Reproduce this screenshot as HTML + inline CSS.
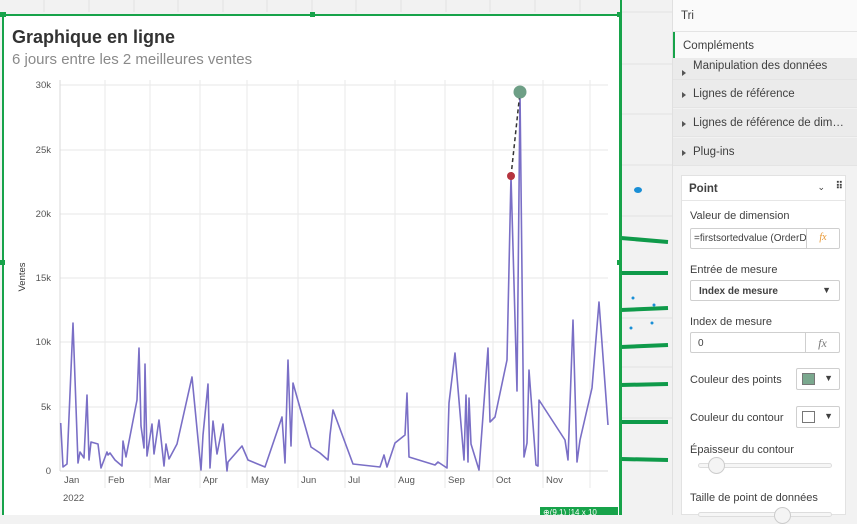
<!DOCTYPE html>
<html><head><meta charset="utf-8"><style>
*{margin:0;padding:0;box-sizing:border-box}
body{width:857px;height:515px;overflow:hidden;background:#f2f2f2;font-family:"Liberation Sans",sans-serif;position:relative;color:#404040}
.abs{position:absolute}
.card{left:2px;top:14px;width:619px;height:501px;background:#fff;border:2px solid #17a34a;border-bottom:none}
.t{font-size:18px;font-weight:bold;color:#333;left:12px;top:27px}
.st{font-size:15px;color:#8a8a8a;left:12px;top:51px}
.panel{left:672px;top:0;width:185px;height:515px;background:#f2f2f2;border-left:1px solid #e0e0e0}
.row{position:absolute;left:0;width:185px;font-size:11.5px;color:#404040}
.sec{background:#ebebeb;height:28px;border-bottom:1px solid #e4e4e4;padding:8px 0 0 20px}
.sec:before{content:"";position:absolute;left:9px;top:12px;border-left:4px solid #555;border-top:3px solid transparent;border-bottom:3px solid transparent}
.lbl{font-size:11px;color:#404040;position:absolute;left:8px}
.box{position:absolute;border:1px solid #cfcfcf;background:#fff;border-radius:2px}
</style></head><body>
<!-- sheet grid top -->
<svg class="abs" style="left:0;top:0" width="672" height="515">
<g stroke="#e2e2e2" stroke-width="1">
<line x1="44" y1="0" x2="44" y2="12"/><line x1="89" y1="0" x2="89" y2="12"/><line x1="134" y1="0" x2="134" y2="12"/><line x1="178" y1="0" x2="178" y2="12"/><line x1="223" y1="0" x2="223" y2="12"/><line x1="267" y1="0" x2="267" y2="12"/><line x1="312" y1="0" x2="312" y2="12"/><line x1="356" y1="0" x2="356" y2="12"/><line x1="401" y1="0" x2="401" y2="12"/><line x1="446" y1="0" x2="446" y2="12"/><line x1="490" y1="0" x2="490" y2="12"/><line x1="535" y1="0" x2="535" y2="12"/><line x1="580" y1="0" x2="580" y2="12"/>
<line x1="622" y1="12" x2="672" y2="12"/><line x1="622" y1="64" x2="672" y2="64"/><line x1="622" y1="114" x2="672" y2="114"/><line x1="622" y1="165" x2="672" y2="165"/><line x1="622" y1="216" x2="672" y2="216"/><line x1="622" y1="318" x2="672" y2="318"/><line x1="622" y1="367" x2="672" y2="367"/><line x1="622" y1="418" x2="672" y2="418"/>
</g>
<g stroke="#0f9a4a" stroke-width="4">
<line x1="621" y1="238" x2="668" y2="242"/><line x1="621" y1="273" x2="668" y2="273"/><line x1="621" y1="310" x2="668" y2="308"/><line x1="621" y1="347" x2="668" y2="345"/><line x1="621" y1="385" x2="668" y2="384"/><line x1="621" y1="422" x2="668" y2="422"/><line x1="621" y1="459" x2="668" y2="460"/>
</g>
<ellipse cx="638" cy="190" rx="4" ry="3" fill="#1a8fd6"/>
<g fill="#1a8fd6"><circle cx="633" cy="298" r="1.5"/><circle cx="654" cy="305" r="1.5"/><circle cx="631" cy="328" r="1.5"/><circle cx="652" cy="323" r="1.5"/></g>
</svg>
<div class="abs card"></div>
<div class="abs" style="left:0;top:12px;width:6px;height:5px;background:#17a34a"></div>
<div class="abs" style="left:310px;top:12px;width:5px;height:5px;background:#17a34a"></div>
<div class="abs" style="left:617px;top:12px;width:5px;height:5px;background:#17a34a"></div>
<div class="abs" style="left:617px;top:260px;width:5px;height:5px;background:#17a34a"></div>
<div class="abs" style="left:0;top:260px;width:5px;height:5px;background:#17a34a"></div>
<div class="abs t">Graphique en ligne</div>
<div class="abs st">6 jours entre les 2 meilleures ventes</div>
<svg class="abs" style="left:0;top:0" width="622" height="515" font-family="Liberation Sans" font-size="9.5" fill="#555">
<g stroke="#ececec" stroke-width="1.2">
<line x1="60" y1="85" x2="608" y2="85"/><line x1="60" y1="150" x2="608" y2="150"/><line x1="60" y1="214" x2="608" y2="214"/><line x1="60" y1="278" x2="608" y2="278"/><line x1="60" y1="342" x2="608" y2="342"/><line x1="60" y1="407" x2="608" y2="407"/>
<line x1="105" y1="80" x2="105" y2="488"/><line x1="150" y1="80" x2="150" y2="488"/><line x1="200" y1="80" x2="200" y2="488"/><line x1="247" y1="80" x2="247" y2="488"/><line x1="298" y1="80" x2="298" y2="488"/><line x1="345" y1="80" x2="345" y2="488"/><line x1="395" y1="80" x2="395" y2="488"/><line x1="445" y1="80" x2="445" y2="488"/><line x1="493" y1="80" x2="493" y2="488"/><line x1="543" y1="80" x2="543" y2="488"/><line x1="590" y1="80" x2="590" y2="488"/>
</g>
<line x1="60" y1="80" x2="60" y2="471" stroke="#d8d8d8"/>
<line x1="60" y1="471" x2="608" y2="471" stroke="#d8d8d8"/>
<g text-anchor="end"><text x="51" y="88">30k</text><text x="51" y="153">25k</text><text x="51" y="217">20k</text><text x="51" y="281">15k</text><text x="51" y="345">10k</text><text x="51" y="410">5k</text><text x="51" y="474">0</text></g>
<text transform="translate(25,277) rotate(-90)" text-anchor="middle" fill="#333">Ventes</text>
<g><text x="64" y="483">Jan</text><text x="108" y="483">Feb</text><text x="154" y="483">Mar</text><text x="203" y="483">Apr</text><text x="251" y="483">May</text><text x="301" y="483">Jun</text><text x="348" y="483">Jul</text><text x="398" y="483">Aug</text><text x="448" y="483">Sep</text><text x="496" y="483">Oct</text><text x="546" y="483">Nov</text><text x="63" y="501">2022</text></g>
<polyline fill="none" stroke="#7a6fc6" stroke-width="1.6" stroke-linejoin="round" points="60.7,423 63,467 67,464 73,323 78,463 80,452 84,458 87,395 89,460 91,442 98,444 101,468 107,452 108,455 110,453 115,460 122,466 123,441 126,457 137,400 139,348 141,426 144,448 145,364 147,456 152,424 154,454 159,420 164,466 166,444 169,459 177,444 192,377 201,470 203,435 208,384 210,468 213,421 217,454 223,424 227,471 228,462 242,446 248,460 265,467 282,417 285,463 288,360 291,446 293,383 311,447 320,453 328,460 330,435 333,410 353,464 380,467 384,455 387,467 395,443 405,435 407,393 409,457 435,465 438,462 447,468 449,403 455,353 464,460 466,395 468,462 469,398 471,444 479,470 488,348 490,422 495,417 507,360 511,176 517,391 520,92 524,457 527,443 529,370 536,465 538,466 539,400 565,440 568,460 573,320 577,462 580,440 592,388 599,302 608,425"/>
<line x1="511" y1="176" x2="520" y2="92" stroke="#333" stroke-width="1.5" stroke-dasharray="4,3"/>
<circle cx="511" cy="176" r="4" fill="#b5343f"/>
<circle cx="520" cy="92" r="6.5" fill="#6e9f86"/>
<rect x="540" y="507" width="78" height="8" fill="#17a34a"/>
<text x="543" y="515" font-size="8" fill="#fff">⊕(9,1) ⁞14 x 10</text>
</svg>
<div class="abs" style="left:620px;top:0;width:2px;height:515px;background:#17a34a"></div>
<div class="abs panel">
 <div class="row" style="top:0;height:32px;background:#fafafa;border-bottom:1px solid #e4e4e4;padding:10px 0 0 8px">Tri</div>
 <div class="row" style="top:32px;height:28px;background:#fafafa;padding:8px 0 0 8px;border-left:2px solid #17a34a">Compléments</div>
 <div class="row sec" style="top:58px;height:22px;padding-top:2px">Manipulation des données</div>
 <div class="row sec" style="top:80px">Lignes de référence</div>
 <div class="row sec" style="top:109px">Lignes de référence de dim…</div>
 <div class="row sec" style="top:138px">Plug-ins</div>
 <div class="row" style="top:166px;height:349px;background:#f2f2f2"></div>
 <div class="abs" style="left:8px;top:175px;width:165px;height:340px;background:#fff;border:1px solid #e2e2e2">
  <div style="position:absolute;left:0;top:0;width:163px;height:25px;border-bottom:1px solid #e6e6e6;font-size:11.5px;font-weight:bold;padding:7px 0 0 7px">Point<span style="position:absolute;right:20px;top:6px;font-weight:normal;font-size:9px">⌄</span><span style="position:absolute;right:4px;top:5px;font-size:10px;letter-spacing:-2px">⠿</span></div>
  <div class="lbl" style="top:34px">Valeur de dimension</div>
  <div class="box" style="left:8px;top:52px;width:150px;height:21px;font-size:10px;padding:4px 0 0 3px;overflow:hidden">=firstsortedvalue (OrderD<span style="position:absolute;right:0;top:0;width:33px;height:19px;border-left:1px solid #cfcfcf;background:#fff;color:#e8952f;font-style:italic;text-align:center;padding-top:3px;font-family:'Liberation Serif'">fx</span></div>
  <div class="lbl" style="top:88px">Entrée de mesure</div>
  <div class="box" style="left:8px;top:104px;width:150px;height:21px;font-size:10px;font-weight:bold;padding:5px 0 0 8px">Index de mesure<span style="position:absolute;right:8px;top:4px;font-size:9px">▼</span></div>
  <div class="lbl" style="top:140px">Index de mesure</div>
  <div class="box" style="left:8px;top:156px;width:150px;height:21px;font-size:10px;padding:5px 0 0 7px">0<span style="position:absolute;right:0;top:0;width:34px;height:19px;border-left:1px solid #cfcfcf;color:#777;font-style:italic;text-align:center;padding-top:3px;font-family:'Liberation Serif';font-size:12px">fx</span></div>
  <div class="lbl" style="top:198px">Couleur des points</div>
  <div class="box" style="left:114px;top:192px;width:44px;height:22px"><div style="position:absolute;left:5px;top:4px;width:13px;height:12px;background:#7aa88e;border:1px solid #777"></div><span style="position:absolute;right:6px;top:4px;font-size:9px">▼</span></div>
  <div class="lbl" style="top:236px">Couleur du contour</div>
  <div class="box" style="left:114px;top:230px;width:44px;height:22px"><div style="position:absolute;left:5px;top:4px;width:13px;height:12px;background:#fff;border:1px solid #777"></div><span style="position:absolute;right:6px;top:4px;font-size:9px">▼</span></div>
  <div class="lbl" style="top:268px">Épaisseur du contour</div>
  <div style="position:absolute;left:16px;top:287px;width:134px;height:5px;border:1px solid #ddd;border-radius:3px;background:#f6f6f6"></div>
  <div style="position:absolute;left:26px;top:281px;width:17px;height:17px;border-radius:50%;background:#f4f4f4;border:1px solid #ccc"></div>
  <div class="lbl" style="top:316px">Taille de point de données</div>
  <div style="position:absolute;left:16px;top:336px;width:134px;height:5px;border:1px solid #ddd;border-radius:3px;background:#f6f6f6"></div>
  <div style="position:absolute;left:92px;top:331px;width:17px;height:17px;border-radius:50%;background:#f4f4f4;border:1px solid #ccc"></div>
 </div>
</div>
</body></html>
